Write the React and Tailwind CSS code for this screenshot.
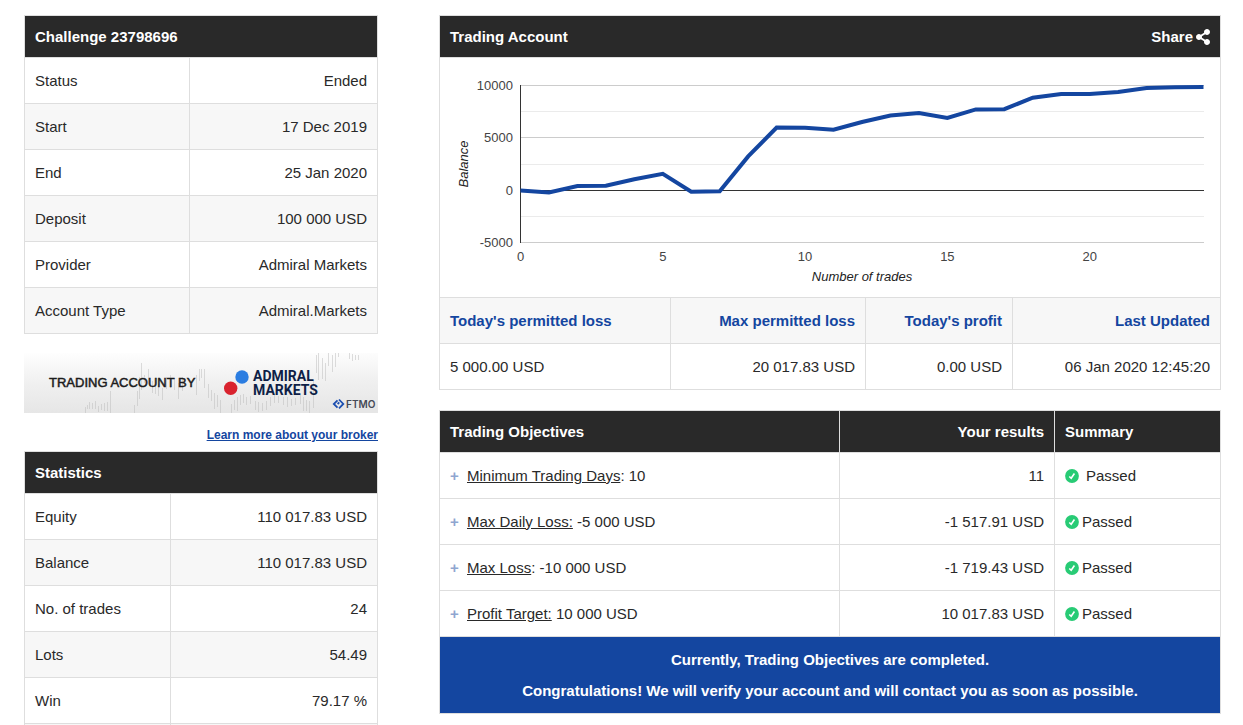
import React from 'react';
import { FaShareAlt } from 'react-icons/fa';

const challengeRows = [
  ['Status', 'Ended'],
  ['Start', '17 Dec 2019'],
  ['End', '25 Jan 2020'],
  ['Deposit', '100 000 USD'],
  ['Provider', 'Admiral Markets'],
  ['Account Type', 'Admiral.Markets'],
];

const statisticsRows = [
  ['Equity', '110 017.83 USD'],
  ['Balance', '110 017.83 USD'],
  ['No. of trades', '24'],
  ['Lots', '54.49'],
  ['Win', '79.17 %'],
  ['', ''],
];

const objectives = [
  { name: 'Minimum Trading Days', suffix: ': 10', result: '11', spaced: true },
  { name: 'Max Daily Loss:', suffix: ' -5 000 USD', result: '-1 517.91 USD' },
  { name: 'Max Loss', suffix: ': -10 000 USD', result: '-1 719.43 USD' },
  { name: 'Profit Target:', suffix: ' 10 000 USD', result: '10 017.83 USD' },
];

const balances = [
  0, -180, 430, 450, 1070, 1590, -120, -80, 3250, 6010, 5980, 5800, 6540,
  7160, 7400, 6920, 7740, 7760, 8850, 9210, 9210, 9400, 9780, 9850, 9870,
];

const InfoTable = ({ title, rows, labelWidth }) => (
  <table className="w-full border-collapse border border-[#dedede]">
    <thead>
      <tr>
        <th colSpan={2} className="h-[42px] px-[10px] bg-[#292929] text-left text-white font-bold">
          {title}
        </th>
      </tr>
    </thead>
    <tbody>
      {rows.map(([label, value]) => (
        <tr key={label} className="even:bg-[#f7f7f7]">
          <td className={`h-[46px] px-[10px] border border-[#dedede] ${labelWidth}`}>{label}</td>
          <td className="h-[46px] px-[10px] border border-[#dedede] text-right">{value}</td>
        </tr>
      ))}
    </tbody>
  </table>
);

const BrokerBanner = () => (
  <svg viewBox="0 0 354 60" className="block w-full" role="img" aria-label="Trading account by Admiral Markets">
    <defs>
      <linearGradient id="bannerBg" x1="0" y1="0" x2="0.05" y2="1">
        <stop offset="0" stopColor="#fefefe" />
        <stop offset="0.5" stopColor="#f0f0f0" />
        <stop offset="1" stopColor="#e6e6e6" />
      </linearGradient>
    </defs>
    <rect width="354" height="60" fill="url(#bannerBg)" />
    {/* faded candlesticks behind the logos */}
    <g fill="none" stroke="#bdbdbd" strokeWidth="1" opacity=".5">
      <path d="M61.5 54v6M63.5 52v4M65.5 49v7M68.5 50v6M71.5 48v8M74.5 53v6M77.5 51v6M80.5 50v8M83.5 49v9M86.5 38v22" />
      <path d="M110.5 52v8M113.5 38v15M115.5 24v22M117.5 10v27M120.5 22v8M124.5 16v15M128.5 28v12M131.5 33v8M134.5 31v12M138.5 35v12M142.5 24v12M146.5 22v13M150.5 26v11M154.5 30v16M158.5 24v14" />
      <path d="M172.5 22v20M175.5 16v12M177.5 16v9M180.5 16v19M184.5 31v14M187.5 37v11M190.5 40v16M193.5 42v12M196.5 47v13" />
      <path d="M207.5 51v9M210.5 47v10M213.5 44v14M216.5 42v10M219.5 41v9M222.5 44v8M226.5 43v8M231.5 48v9M234.5 49v10M238.5 50v8M242.5 48v9M246.5 44v9M250.5 42v8M254.5 43v7M259.5 44v8M263.5 44v10M267.5 46v7M271.5 45v7M276.5 42v9M279.5 44v14M282.5 47v11M285.5 48v12M289.5 28v27" />
      <path d="M292.5 2v18M294.5 0v27M298.5 5v21M301.5 10v18M304.5 0v13M308.5 2v17M311.5 0v14M314.5 0v4M325.5 0v6M328.5 1v7M331.5 2v5M334.5 2v5" />
    </g>
    <text
      x="25"
      y="34"
      fontFamily="'Liberation Sans', Arial, sans-serif"
      fontSize="13"
      fill="#1c1c1c"
      stroke="#1c1c1c"
      strokeWidth="0.5"
    >
      TRADING ACCOUNT BY
    </text>
    <circle cx="218" cy="24" r="6.7" fill="#2b7de1" />
    <circle cx="206.7" cy="35.3" r="6.7" fill="#d9232e" />
    <g fontFamily="Roboto, sans-serif" fontSize="14" fontWeight="700" fill="#0e1f47">
      <text x="229" y="28">ADMIRAL</text>
      <text x="229" y="42">MARKETS</text>
    </g>
    <g fill="none" stroke="#1c4fb0" strokeWidth="1.8">
      <path d="M313.5 47.4 309.8 51 313.5 54.6" />
      <path d="M315 46.5 319.3 51 315 55.3M313.6 51l1.7-1.7" />
    </g>
    <text x="322" y="55" fontFamily="Inter, sans-serif" fontSize="10" fontWeight="600" fill="#454a57">FTMO</text>
  </svg>
);

const plotLeft = 80.5;
const plotRight = 763.5;
const toX = (trade) => plotLeft + (trade * (plotRight - plotLeft)) / 24;
const toY = (value) => 132.5 - (value * 52.4) / 5000;

const BalanceChart = () => {
  const points = balances.map((value, i) => `${toX(i)},${toY(value)}`).join(' ');

  return (
    <svg
      viewBox="0 0 780 239"
      className="block w-full"
      fontFamily="'Liberation Sans', Arial, sans-serif"
      fontSize="13"
      role="img"
      aria-label="Balance by number of trades"
    >
      <path d="M80 53.5H764M80 106.5H764M80 158.5H764" stroke="#ebebeb" />
      <path d="M80 27.5H764M80 79.5H764M80 184.5H764" stroke="#cccccc" />
      <path d="M80 132.5H764M80.5 27V185" stroke="#333333" fill="none" />
      <polyline points={points} fill="none" stroke="#1446a0" strokeWidth="4" />
      <g fill="#444444" textAnchor="end">
        <text x="73" y="32">10000</text>
        <text x="73" y="84">5000</text>
        <text x="73" y="137">0</text>
        <text x="73" y="189">-5000</text>
      </g>
      <g fill="#444444" textAnchor="middle">
        {[0, 5, 10, 15, 20].map((trade) => (
          <text key={trade} x={toX(trade)} y="203">{trade}</text>
        ))}
      </g>
      <g fill="#222222" fontStyle="italic" textAnchor="middle">
        <text x="422" y="223">Number of trades</text>
        <text transform="translate(28 106) rotate(-90)">Balance</text>
      </g>
    </svg>
  );
};

const PassedIcon = () => (
  <svg viewBox="0 0 14 14" className="w-[14px] h-[14px] shrink-0" aria-hidden="true">
    <circle cx="7" cy="7" r="6.9" fill="#28cb75" />
    <path d="M4.3 7.5 6.2 9.3 9.4 4.5" fill="none" stroke="#ffffff" strokeWidth="1.6" />
  </svg>
);

const TradingAccount = () => (
  <table className="w-full table-fixed border-collapse border border-[#dedede]">
    <colgroup>
      <col className="w-[231px]" />
      <col className="w-[195px]" />
      <col className="w-[147px]" />
      <col />
    </colgroup>
    <thead>
      <tr>
        <th colSpan={4} className="h-[42px] px-[10px] bg-[#292929] text-white font-bold">
          <div className="flex items-center justify-between">
            <span>Trading Account</span>
            <button type="button" className="flex items-center gap-[3px] font-bold cursor-pointer">
              Share
              <FaShareAlt className="w-[14px] h-4" />
            </button>
          </div>
        </th>
      </tr>
    </thead>
    <tbody>
      <tr>
        <td colSpan={4} className="p-0 border border-[#dedede]">
          <BalanceChart />
        </td>
      </tr>
      <tr className="bg-[#f7f7f7] text-[#1446a0]">
        <th className="h-[46px] px-[10px] border border-[#dedede] text-left font-bold">Today's permitted loss</th>
        <th className="h-[46px] px-[10px] border border-[#dedede] text-right font-bold">Max permitted loss</th>
        <th className="h-[46px] px-[10px] border border-[#dedede] text-right font-bold">Today's profit</th>
        <th className="h-[46px] px-[10px] border border-[#dedede] text-right font-bold">Last Updated</th>
      </tr>
      <tr>
        <td className="h-[46px] px-[10px] border border-[#dedede]">5 000.00 USD</td>
        <td className="h-[46px] px-[10px] border border-[#dedede] text-right">20 017.83 USD</td>
        <td className="h-[46px] px-[10px] border border-[#dedede] text-right">0.00 USD</td>
        <td className="h-[46px] px-[10px] border border-[#dedede] text-right">06 Jan 2020 12:45:20</td>
      </tr>
    </tbody>
  </table>
);

const TradingObjectives = () => (
  <table className="w-full table-fixed border-collapse border border-[#dedede]">
    <colgroup>
      <col />
      <col className="w-[215px]" />
      <col className="w-[166px]" />
    </colgroup>
    <thead>
      <tr className="bg-[#292929] text-white">
        <th className="h-[42px] px-[10px] border border-[#dedede] text-left font-bold">Trading Objectives</th>
        <th className="h-[42px] px-[10px] border border-[#dedede] text-right font-bold">Your results</th>
        <th className="h-[42px] px-[10px] border border-[#dedede] text-left font-bold">Summary</th>
      </tr>
    </thead>
    <tbody>
      {objectives.map(({ name, suffix, result, spaced }) => (
        <tr key={name}>
          <td className="h-[46px] px-[10px] border border-[#dedede]">
            <div className="flex items-center gap-2">
              <button type="button" aria-label={`Show ${name}`} className="w-[9px] text-left font-bold text-[#8fa6d0] cursor-pointer">+</button>
              <span>
                <a href="#" className="underline">{name}</a>
                {suffix}
              </span>
            </div>
          </td>
          <td className="h-[46px] px-[10px] border border-[#dedede] text-right">{result}</td>
          <td className="h-[46px] px-[10px] border border-[#dedede]">
            <div className={`flex items-center ${spaced ? 'gap-[7px]' : 'gap-[3px]'}`}>
              <PassedIcon />
              <span>Passed</span>
            </div>
          </td>
        </tr>
      ))}
      <tr>
        <td colSpan={3} className="h-[77px] px-[10px] bg-[#1446a0] text-center text-white font-bold">
          <p>Currently, Trading Objectives are completed.</p>
          <p className="mt-[11px]">Congratulations! We will verify your account and will contact you as soon as possible.</p>
        </td>
      </tr>
    </tbody>
  </table>
);

const App = () => {
  return (
    <main className="grid grid-cols-[354fr_782fr] items-start gap-x-[61px] h-screen overflow-hidden bg-white pt-[15px] pl-6 pr-[22px] font-['Liberation_Sans',Arial,sans-serif] text-[15px] leading-5 text-[#292929]">
      <aside>
        <InfoTable title="Challenge 23798696" rows={challengeRows} labelWidth="w-[165px]" />
        <div className="mt-[19px]">
          <BrokerBanner />
        </div>
        <div className="mt-3 mb-[6px] text-right text-[12px]">
          <a href="#" className="font-bold text-[#1446a0] underline">Learn more about your broker</a>
        </div>
        <InfoTable title="Statistics" rows={statisticsRows} labelWidth="w-[146px]" />
      </aside>

      <section className="flex flex-col gap-5">
        <TradingAccount />
        <TradingObjectives />
      </section>
    </main>
  );
};

export default App;
